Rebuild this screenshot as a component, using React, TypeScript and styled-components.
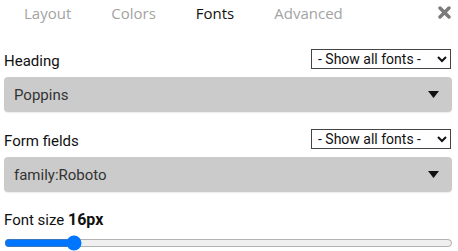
import { useState } from 'react'
import styled, { createGlobalStyle } from 'styled-components'

const GlobalStyle = createGlobalStyle`
  body {
    margin: 0;
    background: #fff;
    font-family: Roboto, 'Liberation Sans', sans-serif;
  }
`

const Panel = styled.div`
  width: 458px;
  padding: 0 6px 0 4px;
  box-sizing: border-box;
`
const TabBar = styled.div`
  display: flex;
  align-items: center;
  height: 25px;
`
const Tab = styled.div<{ $active?: boolean }>`
  padding: 0 20px;
  font-family: 'Open Sans', Lato, sans-serif;
  font-size: 15px;
  line-height: 24px;
  color: ${(p) => (p.$active ? '#111' : '#a3a3a3')};
  cursor: pointer;
`
const Close = styled.div`
  margin-left: auto;
  margin-right: 1px;
  display: flex;
  align-items: center;
  cursor: pointer;
`
const Section = styled.div`
  display: flex;
  flex-direction: column;
`
const LabelRow = styled.div<{ $top: number }>`
  display: flex;
  align-items: flex-end;
  justify-content: space-between;
  margin-top: ${(p) => p.$top}px;
  height: 20px;
`
const Label = styled.div`
  font-size: 15px;
  color: #111;
  line-height: 18px;
  margin-bottom: -1px;
`
const SmallSelect = styled.select`
  width: 140px;
  height: 20px;
  font-family: Roboto, sans-serif;
  font-size: 14px;
  color: #111;
  border: 1px solid #444;
  border-radius: 0;
  background: #fff;
  padding: 0 0 0 2px;
  margin: 0 1px 0 0;
`
const FontBox = styled.div`
  display: flex;
  align-items: center;
  justify-content: space-between;
  margin-top: 8px;
  height: 35px;
  padding: 0 13px 0 10px;
  background: #cbcbcb;
  border-radius: 4px;
  box-shadow: 0 1px 1px rgba(0, 0, 0, 0.08);
  font-size: 15px;
  color: #333;
  cursor: pointer;
`
const SizeLabel = styled.div`
  margin-top: 19px;
  font-size: 15px;
  color: #111;
  line-height: 18px;
  b {
    font-weight: 700;
    font-size: 16px;
  }
`
const Range = styled.input`
  display: block;
  width: 449px;
  margin: 6px 0 0 0;
  accent-color: #0075ff;
`

function Caret() {
  return (
    <svg width="11" height="7" viewBox="0 0 11 7">
      <path d="M0 0 H11 L5.5 7 Z" fill="#111" />
    </svg>
  )
}

function App() {
  const [size, setSize] = useState(16)
  const tabs = ['Layout', 'Colors', 'Fonts', 'Advanced']

  return (
    <Panel>
      <GlobalStyle />
      <TabBar>
        {tabs.map((t) => (
          <Tab key={t} $active={t === 'Fonts'}>
            {t}
          </Tab>
        ))}
        <Close>
          <svg width="13" height="13" viewBox="0 0 13 13">
            <path d="M2 2 L11 11 M11 2 L2 11" stroke="#7a7a7a" strokeWidth="3.4" strokeLinecap="round" />
          </svg>
        </Close>
      </TabBar>

      <Section>
        <LabelRow $top={24}>
          <Label>Heading</Label>
          <SmallSelect defaultValue="all">
            <option value="all">- Show all fonts -</option>
          </SmallSelect>
        </LabelRow>
        <FontBox>
          <span>Poppins</span>
          <Caret />
        </FontBox>
      </Section>

      <Section>
        <LabelRow $top={17}>
          <Label>Form fields</Label>
          <SmallSelect defaultValue="all">
            <option value="all">- Show all fonts -</option>
          </SmallSelect>
        </LabelRow>
        <FontBox>
          <span>family:Roboto</span>
          <Caret />
        </FontBox>
      </Section>

      <SizeLabel>
        Font size <b>{size}px</b>
      </SizeLabel>
      <Range type="range" min={8} max={64} value={size} onChange={(e) => setSize(Number(e.target.value))} />
    </Panel>
  )
}

export default App
